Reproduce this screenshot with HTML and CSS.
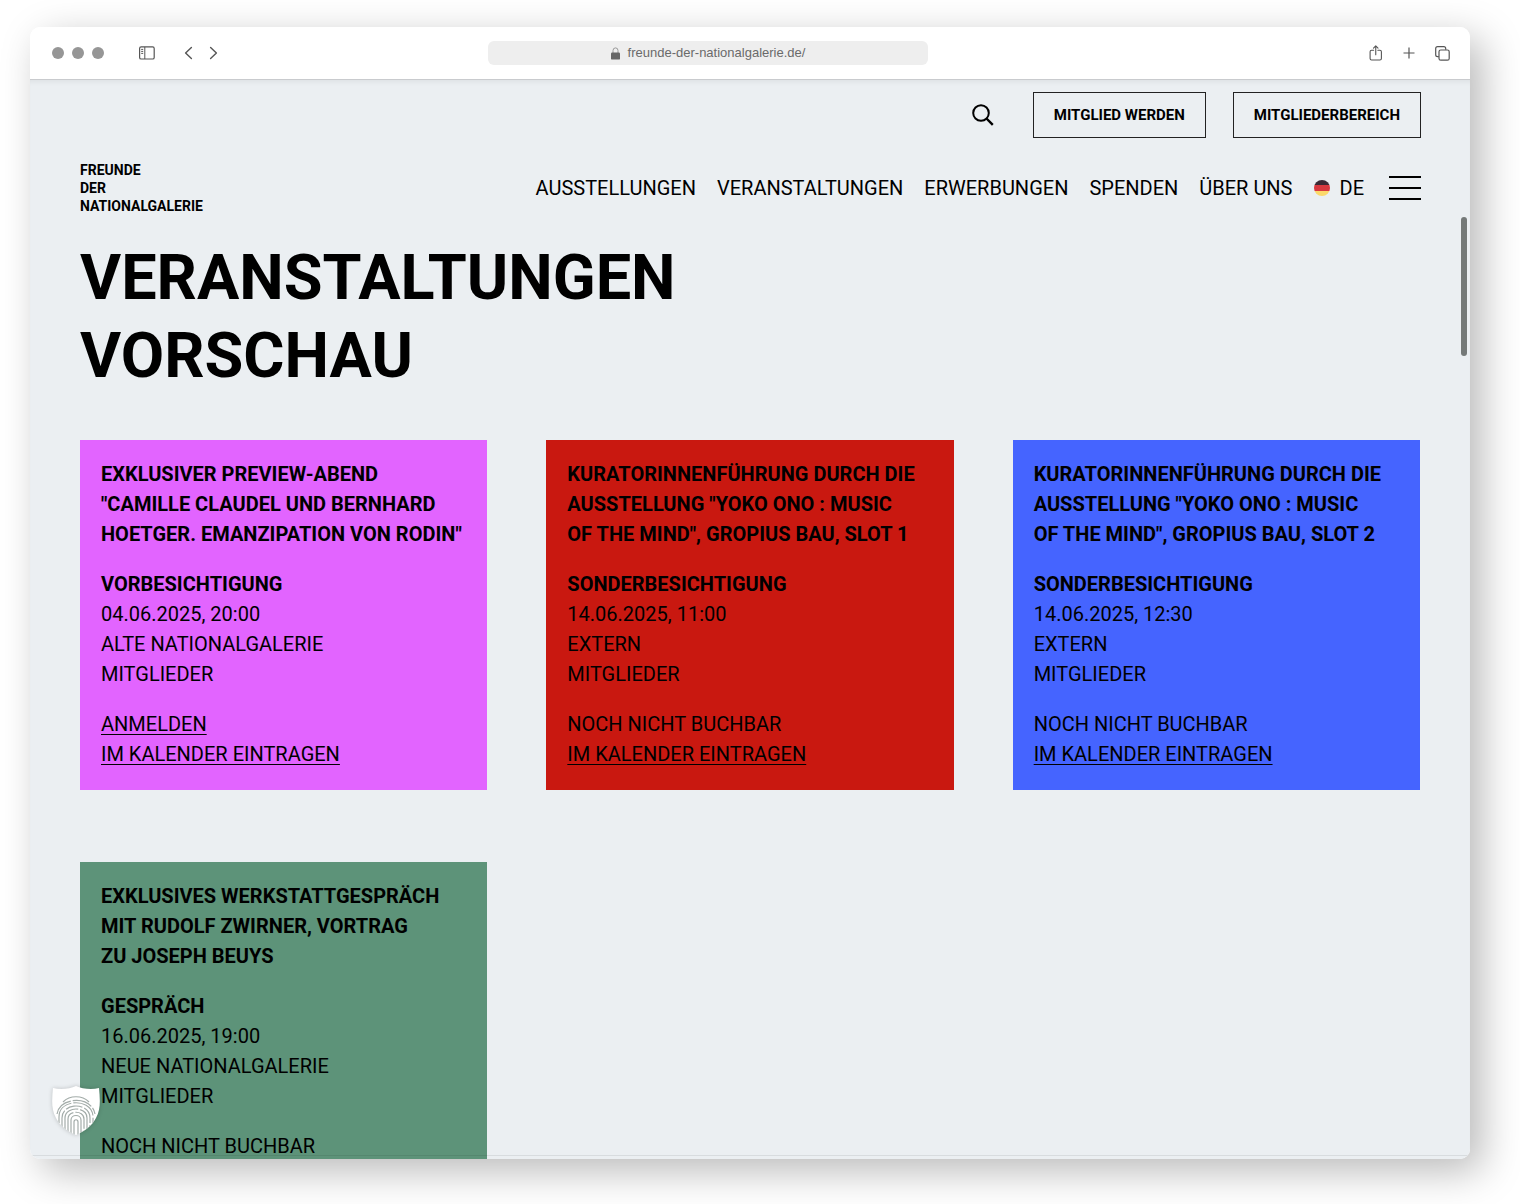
FILE: index.html
```html
<!DOCTYPE html>
<html lang="de">
<head>
<meta charset="utf-8">
<meta name="viewport" content="width=device-width, initial-scale=1">
<title>Freunde der Nationalgalerie – Veranstaltungen</title>
<link rel="stylesheet" href="styles.css">
</head>
<body>
<div class="window">
  <div class="toolbar">
    <div class="toolbar-side">
      <div class="lights"><span class="light"></span><span class="light"></span><span class="light"></span></div>
      <button class="tool sidebar-tool" type="button" aria-label="Seitenleiste">
        <svg width="16" height="14" viewBox="0 0 16 14" fill="none" stroke="currentColor"><rect x=".6" y=".8" width="14.6" height="12.2" rx="1.6" stroke-width="1.2"/><path d="M5.8 1v12M2.2 3.4h2M2.2 5.4h2M2.2 7.4h2"/></svg>
      </button>
      <div class="history">
        <button class="tool" type="button" aria-label="Zurück"><svg width="9" height="14" viewBox="0 0 9 14" fill="none" stroke="currentColor" stroke-width="1.4" stroke-linecap="round" stroke-linejoin="round"><path d="M7.4 1.5 1.6 7l5.8 5.500"/></svg></button>
        <button class="tool" type="button" aria-label="Vor"><svg width="9" height="14" viewBox="0 0 9 14" fill="none" stroke="currentColor" stroke-width="1.4" stroke-linecap="round" stroke-linejoin="round"><path d="M1.600 1.500 7.400 7 1.600 12.500"/></svg></button>
      </div>
    </div>
    <div class="address">
      <svg width="9" height="13" viewBox="0 0 9 13"><path d="M2 6V3.600a2.500 2.700 0 0 1 5 0V6" fill="none" stroke="#999"/><rect y="5.400" width="9" height="7.200" rx="1.200" fill="#666"/></svg>
      <span>freunde-der-nationalgalerie.de/</span>
    </div>
    <div class="toolbar-side toolbar-end">
      <button class="tool" type="button" aria-label="Teilen"><svg width="14" height="16" viewBox="0 0 14 16" fill="none" stroke="currentColor" stroke-width="1.100" stroke-linecap="round" stroke-linejoin="round"><path d="M4.600 5.300H2.600A1.500 1.500 0 0 0 1.100 6.800v6.700A1.500 1.500 0 0 0 2.600 15h8.300a1.500 1.500 0 0 0 1.500-1.500V6.800a1.500 1.500 0 0 0-1.500-1.500H8.900M6.750 9.800V1M4.500 3.100 6.750.9 9 3.100"/></svg></button>
      <button class="tool" type="button" aria-label="Neuer Tab"><svg width="12" height="12" viewBox="0 0 12 12" stroke="currentColor" stroke-width="1.200"><path d="M6 .5v11M.5 6h11"/></svg></button>
      <button class="tool" type="button" aria-label="Tabübersicht"><svg width="15" height="15" viewBox="0 0 15 15" fill="none" stroke="currentColor" stroke-width="1.200"><rect x="4" y="4" width="10.200" height="10.200" rx="1.800"/><path d="M3.800 10.700H2.600A1.900 1.900 0 0 1 .7 8.800V2.600A1.900 1.900 0 0 1 2.600.7h6.200a1.900 1.900 0 0 1 1.900 1.900V3.800"/></svg></button>
    </div>
  </div>

  <div class="page">
    <header>
      <div class="top-row">
        <button class="search" type="button" aria-label="Suche"><svg width="22" height="22" viewBox="0 0 22 22" fill="none" stroke="currentColor" stroke-width="2"><circle cx="9" cy="9" r="7.800"/><path d="m14.500 14.500 6.300 6.300" stroke-width="2.400"/></svg></button>
        <a class="outline" href="#">MITGLIED WERDEN</a>
        <a class="outline" href="#">MITGLIEDERBEREICH</a>
      </div>
      <div class="nav-row">
        <a class="logo" href="#">FREUNDE<br>DER<br>NATIONALGALERIE</a>
        <nav>
          <a href="#">AUSSTELLUNGEN</a>
          <a href="#">VERANSTALTUNGEN</a>
          <a href="#">ERWERBUNGEN</a>
          <a href="#">SPENDEN</a>
          <a href="#">ÜBER UNS</a>
          <a class="lang" href="#"><span class="flag"></span>DE</a>
          <button class="menu" type="button" aria-label="Menü"><span></span><span></span><span></span></button>
        </nav>
      </div>
    </header>
    <main>
      <h1>VERANSTALTUNGEN<br>VORSCHAU</h1>
      <div class="cards">
        <article class="card violet">
          <h2>EXKLUSIVER PREVIEW-ABEND<br>"CAMILLE CLAUDEL UND BERNHARD<br>HOETGER. EMANZIPATION VON RODIN"</h2>
          <p><strong>VORBESICHTIGUNG</strong><br>04.06.2025, 20:00<br>ALTE NATIONALGALERIE<br>MITGLIEDER</p>
          <p><a href="#">ANMELDEN</a><br><a href="#">IM KALENDER EINTRAGEN</a></p>
        </article>
        <article class="card red">
          <h2>KURATORINNENFÜHRUNG DURCH DIE<br>AUSSTELLUNG "YOKO ONO : MUSIC<br>OF THE MIND", GROPIUS BAU, SLOT 1</h2>
          <p><strong>SONDERBESICHTIGUNG</strong><br>14.06.2025, 11:00<br>EXTERN<br>MITGLIEDER</p>
          <p>NOCH NICHT BUCHBAR<br><a href="#">IM KALENDER EINTRAGEN</a></p>
        </article>
        <article class="card blue">
          <h2>KURATORINNENFÜHRUNG DURCH DIE<br>AUSSTELLUNG "YOKO ONO : MUSIC<br>OF THE MIND", GROPIUS BAU, SLOT 2</h2>
          <p><strong>SONDERBESICHTIGUNG</strong><br>14.06.2025, 12:30<br>EXTERN<br>MITGLIEDER</p>
          <p>NOCH NICHT BUCHBAR<br><a href="#">IM KALENDER EINTRAGEN</a></p>
        </article>
        <article class="card green">
          <h2>EXKLUSIVES WERKSTATTGESPRÄCH<br>MIT RUDOLF ZWIRNER, VORTRAG<br>ZU JOSEPH BEUYS</h2>
          <p><strong>GESPRÄCH</strong><br>16.06.2025, 19:00<br>NEUE NATIONALGALERIE<br>MITGLIEDER</p>
          <p>NOCH NICHT BUCHBAR</p>
        </article>
      </div>
    </main>
    <span class="scroll-thumb"></span>
    <span class="bottom-line"></span>
    <button class="privacy" type="button" aria-label="Datenschutz-Einstellungen">
      <svg width="48" height="50" viewBox="0 0 48 50" fill="none">
        <clipPath id="shield"><path d="M24 1C18 4 8 5 1 3 0 14-1 24 4 33c4 8 11 13 20 17 9-4 16-9 20-17 5-9 4-19 3-30C40 5 30 4 24 1Z"/></clipPath>
        <g clip-path="url(#shield)">
          <path d="M0 0h48v50H0Z" fill="#fff"/>
          <g stroke="#a3aca9" stroke-width="1.200">
            <path d="M11 17c7-7 19-7 26 0"/>
            <path d="M5 29c3-18 35-18 38 0" stroke-dasharray="20 2"/>
            <path d="M7 38V32c0-19 34-19 34 0v6" stroke-dasharray="26 2"/>
            <path d="M10 42V33c0-16 28-16 28 0v9" stroke-dasharray="17 2"/>
            <path d="M13 45V33c0-12 22-12 22 0v12" stroke-dasharray="30 2"/>
            <path d="M16 47V34c0-9 16-9 16 0v13" stroke-dasharray="22 2"/>
            <path d="M19 49V35c0-6 10-6 10 0v14"/>
            <path d="M22 50V37c0-3 4-3 4 0v13"/>
          </g>
        </g>
      </svg>
    </button>
  </div>
</div>
</body>
</html>
```
FILE: styles.css
```css
* { box-sizing: border-box; }

body {
  margin: 0;
  padding: 27px 50px 45px 30px;
  height: 100vh;
  overflow: hidden;
  background: #fff;
  color: #000;
  font: 20px/30px Roboto, "Liberation Sans", sans-serif;
}

button {
  display: flex;
  padding: 0;
  border: 0;
  background: none;
  color: inherit;
}

a { color: inherit; text-decoration: none; }
svg { display: block; }

.window {
  display: flex;
  flex-direction: column;
  height: 100%;
  border-radius: 10px;
  box-shadow: 12px 12px 40px rgba(0, 0, 0, 0.28);
}

/* Browser toolbar */
.toolbar {
  display: flex;
  align-items: center;
  height: 53px;
  padding: 0 20px 0 22px;
  border-bottom: 1px solid #c9cbce;
  border-radius: 10px 10px 0 0;
  background: #fff;
  color: #555;
}

.toolbar-side { display: flex; flex: 1; align-items: center; }
.toolbar-end { justify-content: flex-end; gap: 20px; }
.lights { display: flex; gap: 8px; }
.light { width: 12px; height: 12px; border-radius: 50%; background: #969696; }
.sidebar-tool { margin-left: 35px; }
.history { display: flex; gap: 16px; margin-left: 29px; }

.address {
  display: flex;
  align-items: center;
  justify-content: center;
  gap: 8px;
  width: 440px;
  height: 24px;
  margin-right: 86px;
  border-radius: 6px;
  background: #eee;
  color: #6a6a6a;
  font: 13px/24px "Liberation Sans", sans-serif;
}

/* Web page */
.page {
  position: relative;
  flex: 1;
  min-height: 0;
  padding: 12px 50px 0;
  overflow: hidden;
  border-radius: 0 0 10px 10px;
  background: #ebeff2;
  box-shadow: inset 0 5px 5px -3px rgba(0, 0, 0, 0.06);
}

header { margin-right: -1px; }

.top-row {
  display: flex;
  align-items: center;
  justify-content: flex-end;
  gap: 27px;
}

.search { margin-right: 12px; }

.outline {
  height: 46px;
  padding: 0 20px;
  border: 1px solid #222;
  font-size: 15px;
  font-weight: 700;
  line-height: 45px;
}

.nav-row {
  display: flex;
  align-items: center;
  justify-content: space-between;
  margin-top: 23px;
}

.logo { font-size: 14px; font-weight: 700; line-height: 18px; }
nav { display: flex; align-items: center; gap: 21px; }
.lang { display: flex; align-items: center; gap: 10px; }

.flag {
  width: 16px;
  height: 16px;
  border-radius: 50%;
  background: linear-gradient(#3b2a35 33%, #d8383f 33% 66%, #fbd96b 66%);
}

.menu { flex-direction: column; gap: 9px; margin-left: 4px; }
.menu span { width: 32px; height: 2px; background: #000; }

h1 {
  margin: 24px 0 45px;
  font-size: 63px;
  font-weight: 700;
  line-height: 78px;
}

.cards {
  display: grid;
  grid-template-columns: repeat(3, minmax(0, 1fr));
  gap: 72px 59px;
}

.card {
  display: flex;
  flex-direction: column;
  gap: 20px;
  padding: 19px 21px 21px;
  white-space: nowrap;
}

.card h2, .card p { margin: 0; }
.card h2 { font-size: 20px; line-height: 30px; }
.card a { text-decoration: underline; text-decoration-thickness: 1px; text-underline-offset: 3px; }
.violet { background: #e264ff; }
.red { background: #c91810; }
.blue { background: #4564ff; }
.green { background: #5d9379; }

.scroll-thumb {
  position: absolute;
  top: 137px;
  right: 3px;
  width: 6px;
  height: 139px;
  border-radius: 3px;
  background: #747978;
}

.bottom-line {
  position: absolute;
  right: 0;
  bottom: 3px;
  left: 0;
  height: 1px;
  background: rgba(0, 0, 0, 0.08);
}

.privacy {
  position: absolute;
  bottom: 24px;
  left: 22px;
  filter: drop-shadow(0 0 2px rgba(0, 0, 0, 0.2));
}
```
